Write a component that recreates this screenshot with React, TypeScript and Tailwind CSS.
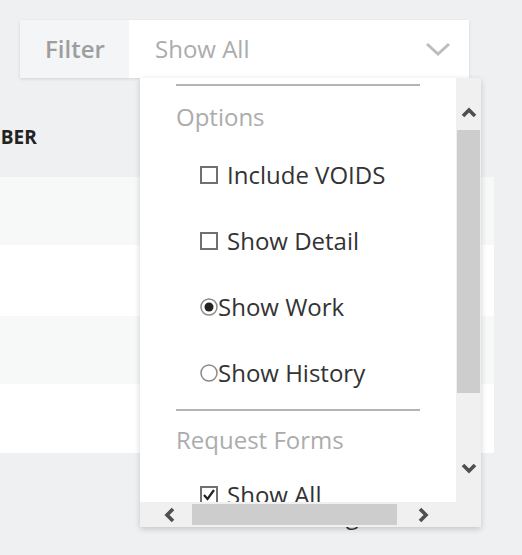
import React from 'react';

function Chevron({ dir, className }: { dir: 'up' | 'down' | 'left' | 'right'; className?: string }) {
  const paths = {
    up: 'M2 10 L8 4 L14 10',
    down: 'M2 3 L8 9 L14 3',
    left: 'M9 2 L3 8 L9 14',
    right: 'M3 2 L9 8 L3 14',
  };
  const vertical = dir === 'up' || dir === 'down';
  return (
    <svg
      width={vertical ? 16 : 12}
      height={vertical ? 12 : 16}
      viewBox={vertical ? '0 0 16 12' : '0 0 12 16'}
      className={className}
    >
      <path d={paths[dir]} fill="none" stroke="#4f4f4f" strokeWidth="3.6" strokeLinejoin="miter" />
    </svg>
  );
}

function Checkbox({ checked }: { checked?: boolean }) {
  return (
    <svg width="18" height="18" viewBox="0 0 18 18" className="mr-[9px] shrink-0">
      <rect x="1" y="1" width="16" height="16" fill="white" stroke="#707070" strokeWidth="2" />
      {checked && <path d="M4 9 L7.5 13 L14 4" fill="none" stroke="#222" strokeWidth="2.2" />}
    </svg>
  );
}

function Radio({ checked }: { checked?: boolean }) {
  return (
    <svg width="18" height="18" viewBox="0 0 18 18" className="shrink-0">
      <circle cx="9" cy="9" r="8" fill="white" stroke="#8a8a8a" strokeWidth="1.5" />
      {checked && <circle cx="9" cy="9" r="4.5" fill="#222" />}
    </svg>
  );
}

const options = [
  { label: 'Include VOIDS', kind: 'check' as const, on: false },
  { label: 'Show Detail', kind: 'check' as const, on: false },
  { label: 'Show Work', kind: 'radio' as const, on: true },
  { label: 'Show History', kind: 'radio' as const, on: false },
];

function FilterMenu() {
  return (
    <div className="absolute left-[120px] top-[58px] z-10 flex h-[449px] w-[341px] flex-col bg-white shadow-[0_2px_6px_rgba(0,0,0,0.18)]">
      <div className="flex min-h-0 flex-1">
        <div className="flex-1 overflow-hidden pl-[36px] pt-[6px] text-[24px] leading-none">
          <div className="h-[2px] w-[244px] bg-[#b4b4b4]" />
          <div className="flex h-[56px] items-center pt-[6px] text-[#acacac]">Options</div>
          {options.map(o => (
            <div key={o.label} className="flex h-[66px] items-center whitespace-nowrap pl-[24px] text-[#333]">
              {o.kind === 'check' ? <Checkbox checked={o.on} /> : <Radio checked={o.on} />}
              <span>{o.label}</span>
            </div>
          ))}
          <div className="mt-[3px] h-[2px] w-[244px] bg-[#b4b4b4]" />
          <div className="flex h-[58px] items-center text-[#acacac]">Request Forms</div>
          <div className="flex h-[52px] items-center whitespace-nowrap pl-[24px] text-[#333]">
            <Checkbox checked />
            <span>Show All</span>
          </div>
        </div>
        {/* vertical scrollbar */}
        <div className="flex w-[25px] flex-col bg-[#f0f0f0]">
          <div className="flex h-[52px] items-end justify-center pb-[12px]">
            <Chevron dir="up" />
          </div>
          <div className="mx-[1px] h-[263px] bg-[#cdcdcd]" />
          <div className="flex-1" />
          <div className="flex h-[60px] justify-center pt-[20px]">
            <Chevron dir="down" />
          </div>
        </div>
      </div>
      {/* horizontal scrollbar */}
      <div className="flex h-[25px] items-center bg-[#f0f0f0] pl-[24px]">
        <Chevron dir="left" />
        <div className="ml-[16px] h-[21px] w-[205px] bg-[#cdcdcd]" />
        <Chevron dir="right" className="ml-[20px]" />
      </div>
    </div>
  );
}

const rows = [
  { h: 'h-[68px]', bg: 'bg-[#f7f8f8]' },
  { h: 'h-[71px]', bg: 'bg-white' },
  { h: 'h-[68px]', bg: 'bg-[#f7f8f8]' },
  { h: 'h-[69px]', bg: 'bg-white' },
];

export default function App() {
  return (
    <div className="h-[555px] w-[522px] overflow-hidden bg-[#eff0f2] font-['Open_Sans',sans-serif]">
      <div className="pl-[20px] pt-[20px]">
        <div className="relative flex h-[58px] w-[449px] shadow-[0_1px_3px_rgba(0,0,0,0.12)]">
          <div className="flex w-[109px] items-center bg-[#f4f5f6] pl-[25px] text-[24px] font-semibold text-[#9e9e9e]">
            Filter
          </div>
          <div className="flex flex-1 items-center justify-between bg-white pl-[26px] pr-[18px] text-[24px] text-[#acacac]">
            <span>Show All</span>
            <svg width="26" height="16" viewBox="0 0 26 16">
              <path d="M2 3 L13 13 L24 3" fill="none" stroke="#bdbdbd" strokeWidth="3" />
            </svg>
          </div>
          <FilterMenu />
        </div>
      </div>

      <div className="w-[494px] overflow-hidden">
        <div className="flex h-[99px] items-center pt-[20px]">
          <span className="-ml-[47px] text-[19px] font-bold text-[#222]">NUMBER</span>
        </div>
        {rows.map((r, i) => (
          <div key={i} className={`${r.h} ${r.bg}`} />
        ))}
      </div>

      <div className="mt-[44px] pl-[264px] text-[24px] text-[#333]">Showing</div>
    </div>
  );
}
